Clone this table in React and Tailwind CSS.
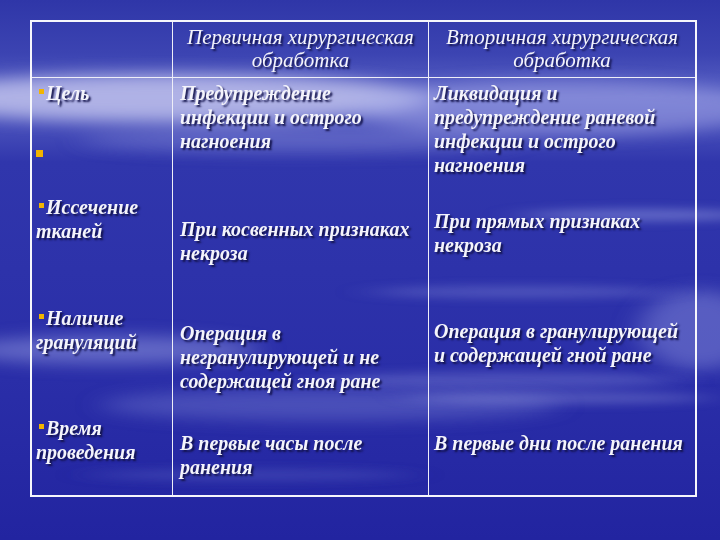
import React from "react";

const body = "font-['Liberation_Serif','Times_New_Roman',serif] italic font-bold text-[20px] leading-[24px] text-[#f4f4fb] [text-shadow:2px_2px_2px_#12124a] whitespace-nowrap";
const head = "font-['Liberation_Serif','Times_New_Roman',serif] italic text-[21px] leading-[23px] text-[#f4f4fb] [text-shadow:2px_2px_2px_#12124a] whitespace-nowrap text-center";

function Bullet() {
  return <span className="inline-block w-[5px] h-[5px] bg-[#f2b400] mr-[2px] align-[6px] not-italic" />;
}

function Background() {
  return (
    <svg className="absolute inset-0" width="720" height="540" viewBox="0 0 720 540">
      <defs>
        <linearGradient id="base" x1="0" y1="0" x2="0" y2="1">
          <stop offset="0" stopColor="#2f36a8" />
          <stop offset="0.1" stopColor="#3c44b2" />
          <stop offset="0.18" stopColor="#5c64c6" />
          <stop offset="0.3" stopColor="#3036ac" />
          <stop offset="0.7" stopColor="#2a2ea8" />
          <stop offset="1" stopColor="#2224a0" />
        </linearGradient>
        <filter id="b1" x="-50%" y="-200%" width="200%" height="500%">
          <feGaussianBlur stdDeviation="14 8" />
        </filter>
        <filter id="b2" x="-50%" y="-200%" width="200%" height="500%">
          <feGaussianBlur stdDeviation="20 5" />
        </filter>
      </defs>
      <rect width="720" height="540" fill="url(#base)" />
      <g filter="url(#b1)">
        <ellipse cx="170" cy="98" rx="260" ry="24" fill="#c4c6ee" opacity="0.8" />
        <ellipse cx="560" cy="108" rx="210" ry="28" fill="#a8acea" opacity="0.5" />
        <ellipse cx="300" cy="140" rx="220" ry="12" fill="#8c92dc" opacity="0.4" />
        <ellipse cx="700" cy="330" rx="60" ry="40" fill="#8e94de" opacity="0.45" />
        <ellipse cx="110" cy="350" rx="150" ry="14" fill="#9aa0e4" opacity="0.5" />
        <ellipse cx="330" cy="405" rx="230" ry="16" fill="#8a90dc" opacity="0.35" />
      </g>
      <g filter="url(#b2)">
        <ellipse cx="640" cy="215" rx="120" ry="6" fill="#a0a6e6" opacity="0.45" />
        <ellipse cx="520" cy="292" rx="150" ry="6" fill="#9aa0e4" opacity="0.3" />
        <ellipse cx="500" cy="380" rx="180" ry="8" fill="#9aa0e4" opacity="0.3" />
        <ellipse cx="560" cy="398" rx="150" ry="6" fill="#b0b4ea" opacity="0.3" />
        <ellipse cx="250" cy="475" rx="160" ry="6" fill="#6a70cc" opacity="0.3" />
      </g>
    </svg>
  );
}

export default function App() {
  return (
    <div className="relative w-[720px] h-[540px] overflow-hidden bg-[#2a2ea8]">
      <Background />
      <div className="relative pt-[20px] pl-[30px]">
        <div className="w-[667px] border-2 border-[#f6f6fc] grid grid-cols-[140px_256px_267px] grid-rows-[56px_108px_110px_110px_89px]">
          {/* header */}
          <div className="border-b border-[#eeeef8]" />
          <div className={"border-l border-b border-[#eeeef8] pt-[4px] " + head}>
            Первичная хирургическая<br />обработка
          </div>
          <div className={"border-l border-b border-[#eeeef8] pt-[4px] " + head}>
            Вторичная хирургическая<br />обработка
          </div>

          {/* row 1 */}
          <div className={"pl-[7px] pt-[3px] " + body}>
            <div><Bullet />Цель</div>
            <div className="mt-[36px] -ml-[3px]"><span className="inline-block w-[7px] h-[7px] bg-[#f2b400] align-[3px]" /></div>
          </div>
          <div className={"border-l border-[#eeeef8] pl-[7px] pt-[3px] " + body}>
            Предупреждение<br />инфекции и острого<br />нагноения
          </div>
          <div className={"border-l border-[#eeeef8] pl-[5px] pt-[3px] " + body}>
            Ликвидация и<br />предупреждение раневой<br />инфекции и острого<br />нагноения
          </div>

          {/* row 2 */}
          <div className={"pl-[4px] pt-[9px] " + body}>
            <span className="pl-[3px]"><Bullet /></span>Иссечение<br />тканей
          </div>
          <div className={"border-l border-[#eeeef8] pl-[7px] pt-[31px] " + body}>
            При косвенных признаках<br />некроза
          </div>
          <div className={"border-l border-[#eeeef8] pl-[5px] pt-[23px] " + body}>
            При прямых признаках<br />некроза
          </div>

          {/* row 3 */}
          <div className={"pl-[4px] pt-[10px] " + body}>
            <span className="pl-[3px]"><Bullet /></span>Наличие<br />грануляций
          </div>
          <div className={"border-l border-[#eeeef8] pl-[7px] pt-[25px] " + body}>
            Операция в<br />негранулирующей и не<br />содержащей гноя ране
          </div>
          <div className={"border-l border-[#eeeef8] pl-[5px] pt-[23px] " + body}>
            Операция в гранулирующей<br />и содержащей гной ране
          </div>

          {/* row 4 */}
          <div className={"pl-[4px] pt-[10px] " + body}>
            <span className="pl-[3px]"><Bullet /></span>Время<br />проведения
          </div>
          <div className={"border-l border-[#eeeef8] pl-[7px] pt-[25px] " + body}>
            В первые часы после<br />ранения
          </div>
          <div className={"border-l border-[#eeeef8] pl-[5px] pt-[25px] " + body}>
            В первые дни после ранения
          </div>
        </div>
      </div>
    </div>
  );
}
